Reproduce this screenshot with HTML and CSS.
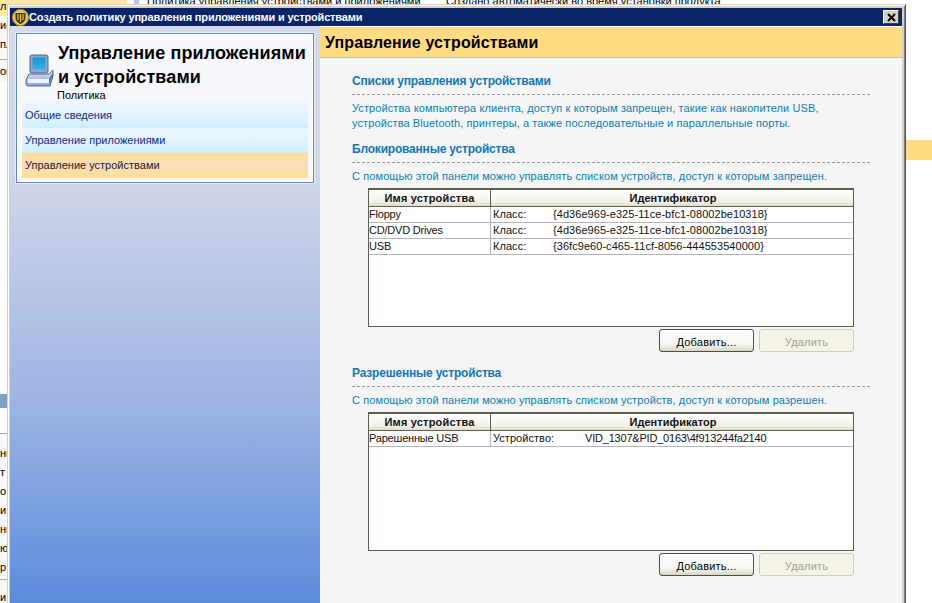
FILE: index.html
```html
<!DOCTYPE html>
<html lang="ru">
<head>
<meta charset="utf-8">
<title>Создать политику управления приложениями и устройствами</title>
<link rel="stylesheet" href="styles.css">
</head>
<body>
<div class="desktop">
  <div class="back-top">
    <span class="back-yellow"></span>
    <span class="back-bar"></span>
    <span class="back-a">Политика управления устройствами и приложениями</span>
    <span class="back-b">Создано автоматически во время установки продукта</span>
  </div>
  <div class="peek peek-one">
    <div class="peek-row peek-y">л</div>
    <div class="peek-row">ис</div>
    <div class="peek-row peek-rule">пл</div>
    <div class="peek-row peek-after">он</div>
  </div>
  <div class="peek-button"></div>
  <div class="peek peek-two">
    <div class="peek-row">ни</div>
    <div class="peek-row">т</div>
    <div class="peek-row">о</div>
    <div class="peek-row">и</div>
    <div class="peek-row">ни</div>
    <div class="peek-row">ю</div>
    <div class="peek-row peek-rule">р</div>
    <div class="peek-row peek-after">и</div>
  </div>
  <div class="back-orange"></div>

  <section class="dialog">
    <header class="titlebar">
      <svg class="shield" width="17" height="17" viewBox="0 0 17 17" aria-hidden="true">
        <circle cx="8.5" cy="8.5" r="8" fill="#f0c84a" stroke="#b8923a"/>
        <path d="M3.5 4 H13.5 V9 C13.5 12 11 14 8.5 15 C6 14 3.5 12 3.5 9 Z" fill="#3d3a2a"/>
        <path d="M6 5 V11 M8.5 5 V13 M11 5 V11" stroke="#f0c84a" stroke-width="1.2" fill="none"/>
      </svg>
      <span class="title-text">Создать политику управления приложениями и устройствами</span>
      <span class="close">
        <svg width="9" height="9" viewBox="0 0 9 9" aria-hidden="true"><path d="M1 1 L8 8 M8 1 L1 8" stroke="#000" stroke-width="2"/></svg>
      </span>
    </header>
    <div class="dialog-body">
      <aside class="sidebar">
        <div class="card">
          <div class="card-head">
            <svg class="pc" width="30" height="34" viewBox="0 0 30 34" aria-hidden="true">
              <defs>
                <linearGradient id="screen" x1="0" y1="0" x2="0" y2="1"><stop offset="0" stop-color="#1e8fd0"/><stop offset="1" stop-color="#37b2e2"/></linearGradient>
                <linearGradient id="case" x1="0" y1="0" x2="0" y2="1"><stop offset="0" stop-color="#dfe6f2"/><stop offset="1" stop-color="#8da3c8"/></linearGradient>
              </defs>
              <path d="M5 3 Q5 1 7 1 H21 Q23 1 23 3 V17 Q23 19 21 19 H7 Q5 19 5 17 Z" fill="#8fa6c9" stroke="#4a6a98"/>
              <rect x="7.5" y="3.5" width="13" height="12" fill="url(#screen)"/>
              <path d="M1 26 L4 20 H24 L28 16 V22 L25 32 H3 Q1 32 1 30 Z" fill="url(#case)" stroke="#4a6a98"/>
              <path d="M3 25 H24 V29 H3 Z" fill="#eef3fa"/>
              <path d="M24 25 L28 18 V22 L24 31 Z" fill="#55749f"/>
            </svg>
            <div class="card-titles">
              <h1 class="card-title">Управление приложениями и устройствами</h1>
              <div class="card-sub">Политика</div>
            </div>
          </div>
          <nav class="nav">
            <a class="nav-item nav-first">Общие сведения</a>
            <a class="nav-item">Управление приложениями</a>
            <a class="nav-item nav-active">Управление устройствами</a>
          </nav>
        </div>
      </aside>
      <main class="main">
        <div class="main-head">Управление устройствами</div>
        <div class="content">
          <h2 class="section-title">Списки управления устройствами</h2>
          <p class="section-text">Устройства компьютера клиента, доступ к которым запрещен, такие как накопители USB,<br>устройства Bluetooth, принтеры, а также последовательные и параллельные порты.</p>
          <h2 class="section-title section-next">Блокированные устройства</h2>
          <p class="section-text">С помощью этой панели можно управлять списком устройств, доступ к которым запрещен.</p>
          <div class="grid">
            <div class="grid-head"><span class="col-a">Имя устройства</span><span class="col-b">Идентификатор</span></div>
            <div class="grid-row"><span class="col-a">Floppy</span><span class="col-b"><span class="kind">Класс:</span><span>{4d36e969-e325-11ce-bfc1-08002be10318}</span></span></div>
            <div class="grid-row"><span class="col-a">CD/DVD Drives</span><span class="col-b"><span class="kind">Класс:</span><span>{4d36e965-e325-11ce-bfc1-08002be10318}</span></span></div>
            <div class="grid-row"><span class="col-a">USB</span><span class="col-b"><span class="kind">Класс:</span><span>{36fc9e60-c465-11cf-8056-444553540000}</span></span></div>
          </div>
          <div class="actions"><button class="btn">Добавить...</button><button class="btn btn-off">Удалить</button></div>
          <h2 class="section-title section-third">Разрешенные устройства</h2>
          <p class="section-text">С помощью этой панели можно управлять списком устройств, доступ к которым разрешен.</p>
          <div class="grid">
            <div class="grid-head"><span class="col-a">Имя устройства</span><span class="col-b">Идентификатор</span></div>
            <div class="grid-row"><span class="col-a">Рарешенные USB</span><span class="col-b"><span class="kind kind-wide">Устройство:</span><span class="device-id">VID_1307&amp;PID_0163\4f913244fa2140</span></span></div>
          </div>
          <div class="actions"><button class="btn">Добавить...</button><button class="btn btn-off">Удалить</button></div>
        </div>
      </main>
    </div>
  </section>
</div>
</body>
</html>
```
FILE: styles.css
```css
* { box-sizing: border-box; }
html, body { margin: 0; padding: 0; height: 100%; overflow: hidden; }
body { font-family: "Liberation Sans", Arial, sans-serif; font-size: 11px; color: #000; background: #fff; }
.desktop { position: relative; width: 932px; height: 603px; overflow: hidden; background: #fff; }

.back-top { position: absolute; left: 0; top: 0; width: 932px; height: 4px; overflow: hidden; }
.back-yellow { position: absolute; left: 0; top: 0; width: 127px; height: 4px; background: #ffe7a8; }
.back-bar { position: absolute; left: 134px; top: 0; width: 5px; height: 4px; background: #b8c8dc; }
.back-a { position: absolute; left: 147px; top: -5px; font-size: 11px; white-space: nowrap; }
.back-b { position: absolute; left: 446px; top: -5px; font-size: 11px; white-space: nowrap; }

.peek { position: absolute; left: 0; width: 7px; overflow: hidden; font-size: 11px; line-height: 19px; background: #f8f8f8; }
.peek-one { top: -3px; }
.peek-two { top: 433px; height: 170px; padding-top: 10px; border-top: 1px solid #aaa; }
.peek-row { height: 19px; white-space: nowrap; }
.peek-y { background: #ffe7a8; }
.peek-rule { height: 22px; border-bottom: 1px solid #aaa; }
.peek-one .peek-rule { height: 25px; }
.peek-after { margin-top: 8px; }
.peek-one .peek-after { margin-top: 2px; }
.peek-button { position: absolute; left: 0; top: 394px; width: 7px; height: 14px; background: #7f9fc8; }
.back-orange { position: absolute; left: 906px; top: 140px; width: 26px; height: 20px; background: #ffdc82; }

.dialog { position: absolute; left: 7px; top: 4px; width: 899px; height: 610px; background: #d4d0c8; border: 1px solid #d4d0c8; border-right-color: #555; box-shadow: inset 1px 1px 0 #fff, inset -1px 0 0 #808080; padding: 3px 3px 0 2px; display: flex; flex-direction: column; }
.titlebar { flex: none; height: 18px; background: #0a246a; display: flex; align-items: center; padding-left: 2px; color: #fff; }
.shield { flex: none; }
.title-text { flex: 1; font-family: "Liberation Sans", Arial, sans-serif; font-weight: 700; font-size: 11px; letter-spacing: -.15px; white-space: nowrap; }
.close { flex: none; width: 16px; height: 14px; margin-right: 3px; background: #d4d0c8; border: 1px solid; border-color: #fff #404040 #404040 #fff; display: flex; align-items: center; justify-content: center; }
.dialog-body { flex: 1; display: flex; min-height: 0; }

.sidebar { flex: none; width: 310px; height: 580px; padding: 7px 6px; background: linear-gradient(180deg, #d6dae9 0%, #d2d7ea 25%, #9db4e3 65%, #5b8bdc 100%); }
.card { height: 150px; background: #f7f8fb; border: 2px solid #fff; outline: 1px solid #5d87c8; outline-offset: -1px; box-shadow: 0 0 0 1px #e8ecf6; padding: 5px 4px 0 4px; display: flex; flex-direction: column; }
.card-head { display: flex; align-items: center; height: 61px; padding-left: 3px; }
.pc { flex: none; margin: 0 3px 0 0; }
.card-title { margin: 0; font-family: "Liberation Sans", Arial, sans-serif; font-size: 18px; line-height: 24px; font-weight: 700; letter-spacing: .1px; }
.card-sub { font-size: 11px; line-height: 12px; margin: 0 0 0 -1px; }
.nav { margin-top: 2px; display: flex; flex-direction: column; }
.nav-item { height: 25px; line-height: 25px; padding-left: 3px; font-size: 11px; color: #0f2a8c; background: linear-gradient(180deg, #ecf5fd 0%, #e1f3fe 55%, #cdeefd 100%); }
.nav-active { color: #1a1a1a; background: linear-gradient(180deg, #fddf8f 0%, #fcdcc0 50%, #fddf8f 100%); }

.main { flex: 1; min-width: 0; background: #f5f5f5; display: flex; flex-direction: column; }
.main-head { flex: none; height: 32px; padding: 1px 0 0 5px; line-height: 30px; font-size: 16px; font-weight: 700; background: #ffdc82; border-top: 1px solid #fff; border-bottom: 1px solid #bdbdbd; letter-spacing: .13px; }
.content { padding: 15px 32px 0 32px; color: #0a7ab0; }
.section-title { margin: 0; height: 22px; line-height: 17px; font-size: 12px; font-weight: 700; letter-spacing: -.2px; color: #1277b4; border-bottom: 1px dashed #999; }
.section-text { margin: 6px 0 0; font-size: 11px; line-height: 15px; letter-spacing: .1px; color: #0a80b4; }
.section-next { margin-top: 10px; }
.section-third { margin-top: 13px; }
.grid { width: 486px; height: 139px; margin: 4px 0 0 16px; background: #fff; border: 1px solid #5f5f4f; border-top-width: 2px; color: #111; }
.grid-head { height: 17px; display: flex; line-height: 16px; font-weight: 700; letter-spacing: .2px; text-align: center; background: linear-gradient(180deg, #fff 0%, #f4f2ea 70%, #e0ddcf 100%); border-bottom: 1px solid #5f5f4f; }
.grid-row { height: 16px; display: flex; line-height: 15px; border-bottom: 1px solid #b5b5b5; }
.col-a { flex: none; width: 122px; border-right: 1px solid #b5b5b5; }
.grid-row .col-a { letter-spacing: -.2px; }
.grid-head .col-a { border-right-color: #5f5f4f; }
.col-b { flex: 1; display: flex; padding-left: 2px; letter-spacing: .05px; }
.grid-head .col-b { display: block; }
.kind { flex: none; width: 60px; }
.kind-wide { width: 92px; }
.device-id { letter-spacing: -.2px; }
.actions { display: flex; justify-content: flex-end; gap: 5px; width: 486px; margin: 2px 0 0 16px; }
.btn { width: 95px; height: 23px; padding: 2px 0 0; font: 11px "Liberation Sans", Arial, sans-serif; letter-spacing: .2px; color: #000; border: 1px solid #4d4d44; border-radius: 3px; background: linear-gradient(180deg, #fff 0%, #f6f5ef 70%, #d8d5c8 100%); }
.btn-off { color: #a5a394; border-color: #cfccb9; background: #f5f3e8; }
```
